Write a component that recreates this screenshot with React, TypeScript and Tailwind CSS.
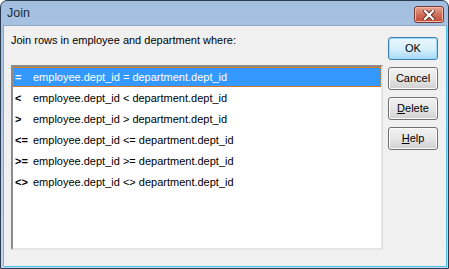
const rows = [
  { op: "=", expr: "employee.dept_id = department.dept_id" },
  { op: "<", expr: "employee.dept_id < department.dept_id" },
  { op: ">", expr: "employee.dept_id > department.dept_id" },
  { op: "<=", expr: "employee.dept_id <= department.dept_id" },
  { op: ">=", expr: "employee.dept_id >= department.dept_id" },
  { op: "<>", expr: "employee.dept_id <> department.dept_id" },
];

function Button({ children, primary }: { children: React.ReactNode; primary?: boolean }) {
  return (
    <div
      className={
        primary
          ? "w-[50px] h-[23px] rounded-[3px] border border-[#3c7fb1] bg-gradient-to-b from-[#eaf6fd] via-[#d9f0fc] to-[#a7d9f5] shadow-[inset_0_0_0_1px_#9cdcf9] flex items-center justify-center text-[11px] text-black"
          : "w-[50px] h-[23px] rounded-[3px] border border-[#707070] bg-gradient-to-b from-[#f2f2f2] via-[#e6e6e6] to-[#d0d0d0] shadow-[inset_0_0_0_1px_#fcfcfc] flex items-center justify-center text-[11px] text-black"
      }
    >
      {children}
    </div>
  );
}

export default function App() {
  return (
    <div
      className="w-[449px] h-[269px] rounded-t-[7px] border border-[#2b3b4f] bg-gradient-to-b from-[#a3bfe0] to-[#c3d7ee] flex flex-col overflow-hidden"
      style={{ fontFamily: '"Liberation Sans", Arial, sans-serif' }}
    >
      {/* Title bar */}
      <div className="h-[24px] flex items-center justify-between pl-[6px] pr-[4px] shrink-0">
        <span className="text-[12.5px] text-[#1e2a3a] mt-[1px]">Join</span>
        <div className="w-[30px] h-[17px] mt-[3px] rounded-[3px] border border-[#7a3a30] bg-gradient-to-b from-[#e8a493] via-[#d0705c] to-[#c24a38] shadow-[inset_0_0_0_1px_#efb8a8] flex items-center justify-center">
          <svg width="12" height="10" viewBox="0 0 12 10">
            <path d="M2 1 L10 9 M10 1 L2 9" stroke="#5a2a22" strokeWidth="4" strokeLinecap="square" />
            <path d="M2 1 L10 9 M10 1 L2 9" stroke="#ffffff" strokeWidth="2.2" strokeLinecap="square" />
          </svg>
        </div>
      </div>

      {/* Client area */}
      <div className="flex-1 mx-[2px] mb-[2px] border-l border-t border-[#8fa6c0] bg-[#f0f0f0] shadow-[1px_1px_0_0_#4cc0e8] flex pl-[7px] text-black">
        <div className="w-[372px] flex flex-col">
          <div className="mt-[7px] h-[14px] text-[11px] leading-[14px]">
            Join rows in employee and department where:
          </div>
          <div className="mt-[18px] h-[185px] border-t-2 border-l-2 border-t-[#8c8c8c] border-l-[#8c8c8c] border-r-2 border-b-2 border-r-[#e3e3e3] border-b-[#e3e3e3] bg-white flex flex-col text-[11px]">
            {rows.map((r, i) => (
              <div
                key={i}
                className={
                  i === 0
                    ? "h-[20px] mb-[1px] flex items-center bg-[#3399ff] text-white border border-dotted border-[#d9752a]"
                    : "h-[21px] flex items-center border border-transparent"
                }
              >
                <span className="w-[19px] pl-[1px] font-bold">{r.op}</span>
                <span>{r.expr}</span>
              </div>
            ))}
          </div>
        </div>
        <div className="ml-[5px] pt-[11px] flex flex-col gap-[7px]">
          <Button primary>OK</Button>
          <Button>Cancel</Button>
          <Button>
            <span>
              <span className="underline">D</span>elete
            </span>
          </Button>
          <Button>
            <span>
              <span className="underline">H</span>elp
            </span>
          </Button>
        </div>
      </div>
    </div>
  );
}
